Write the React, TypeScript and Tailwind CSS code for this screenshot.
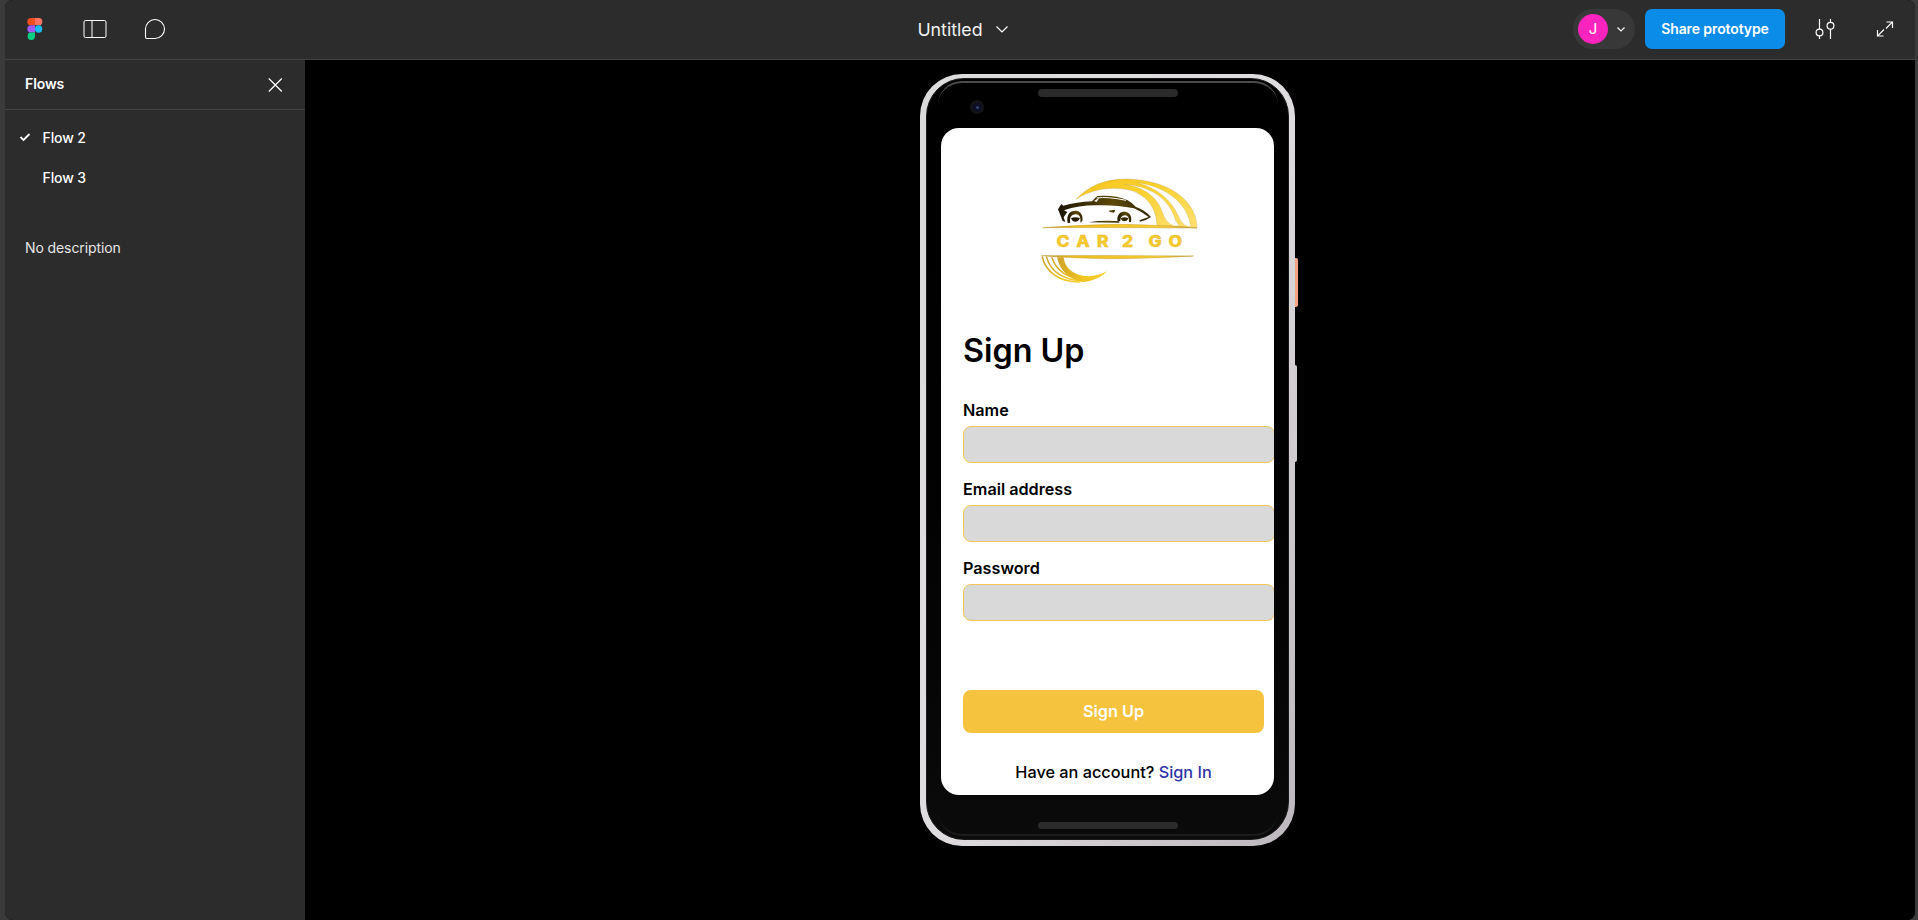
import React from "react";

function FigmaLogo() {
  return (
    <svg width="16" height="24" viewBox="0 0 16 24">
      <path d="M4 1h4v7.3H4A3.65 3.65 0 0 1 4 1z" fill="#f24e1e" />
      <path d="M8 1h3.7a3.65 3.65 0 0 1 0 7.3H8z" fill="#ff7262" />
      <path d="M4 8.3h4v7.3H4a3.65 3.65 0 0 1 0-7.3z" fill="#a259ff" />
      <circle cx="11.6" cy="12" r="3.65" fill="#1abcfe" />
      <path d="M4 15.6h4v3.7a3.7 3.7 0 1 1-4-3.7z" fill="#0acf83" />
    </svg>
  );
}

function CarLogo() {
  return (
    <svg width="200" height="140" viewBox="0 0 600 420" className="shrink-0">
      <defs>
        <linearGradient id="arc" x1="0" y1="0" x2="1" y2="1">
          <stop offset="0" stopColor="#f3c21c" />
          <stop offset="0.4" stopColor="#fbd22e" />
          <stop offset="1" stopColor="#ffe070" />
        </linearGradient>
        <linearGradient id="arc2" x1="0" y1="0" x2="1" y2="0">
          <stop offset="0" stopColor="#cfa22a" />
          <stop offset="0.5" stopColor="#f0c31e" />
          <stop offset="1" stopColor="#f9d235" />
        </linearGradient>
        <linearGradient id="line" x1="0" y1="0" x2="1" y2="0">
          <stop offset="0" stopColor="#a88a3a" />
          <stop offset="0.2" stopColor="#eebd1d" />
          <stop offset="0.8" stopColor="#f8cf35" />
          <stop offset="1" stopColor="#b89c4a" />
        </linearGradient>
        <linearGradient id="body" x1="0" y1="0" x2="1" y2="0">
          <stop offset="0" stopColor="#1d1503" />
          <stop offset="0.6" stopColor="#5d4a08" />
          <stop offset="1" stopColor="#2e2405" />
        </linearGradient>
      </defs>
      <path
        d="M168 118C205 78 255 56 322 57C440 60 530 118 531 203L411 196C410 145 378 98 318 88C265 80 215 88 168 118Z"
        fill="url(#arc)"
        stroke="#b59a45"
        strokeWidth="1"
      />
      <g fill="#fff" stroke="#c9ae5c" strokeWidth="1">
        <path d="M312 73C372 80 412 112 428 158Q436 188 462 198Q472 198 479 197Q466 186 461 165C440 112 388 78 312 73Z" />
        <path d="M352 68C412 84 456 122 474 166Q484 192 502 199L513 200Q510 190 507 176C488 118 428 78 352 68Z" />
      </g>
      <path d="M68 203Q190 194 300 193Q430 195 531 204Q300 202 68 203Z" fill="url(#line)" stroke="#c79c2a" strokeWidth="1.5" />
      <path d="M64 287Q290 286 521 288Q420 294 290 296Q160 295 64 287Z" fill="url(#line)" stroke="#c79c2a" strokeWidth="1.5" />
      <g fill="url(#body)">
        <path d="M114 148L124 132L130 137Q170 126 216 124Q226 113 232 108Q285 104 322 120Q336 128 347 140Q375 150 393 171Q378 182 360 185L358 181L386 171Q365 155 342 145Q280 133 228 136Q175 136 132 151L142 156L131 172L136 186L128 183Z" />
        <path d="M143 189C138 160 153 151 168 152C182 153 190 166 187 183L181 188Q184 162 166 163C153 164 148 174 151 188Z" />
        <path d="M292 182C291 160 303 154 316 155C330 157 337 170 333 186L327 187Q328 166 315 166Q300 167 301 184Z" />
        <path d="M153 174Q166 170 180 174Q176 185 166 185Q156 185 153 174ZM302 175Q314 169 325 175Q322 184 313 184Q305 184 302 175Z" />
        <path d="M205 187Q250 180 298 184L298 188Z M266 152L286 149L282 158L270 156Z" />
      </g>
      <path d="M230 114Q262 109 318 121" fill="none" stroke="#fff" strokeWidth="3" />
      <path d="M222 123L238 113L230 126Z" fill="#fff" />
      <g fill="none" stroke="url(#arc2)" strokeLinecap="round">
        <path d="M67 291C76 333 116 367 180 366" strokeWidth="4.500" />
        <path d="M80 292C91 332 127 361 190 363" strokeWidth="4.500" />
        <path d="M96 293C108 330 140 355 200 360" strokeWidth="4.500" />
      </g>
      <path d="M111 292L131 292C134 327 164 347 204 349Q235 348 262 333Q238 361 190 366C146 358 119 331 111 292Z" fill="url(#arc2)" />
      <g
        fill="#f7cb2e"
        stroke="#e0b326"
        strokeWidth="1"
        fontFamily="Inter, 'Liberation Sans', sans-serif"
        fontWeight="800"
        fontSize="47"
        transform="scale(1.12 1)"
      >
        <text y="262" x="98 151 206 273 344.500 398">CAR2GO</text>
      </g>
    </svg>
  );
}

function Header() {
  return (
    <header className="grid h-[60px] shrink-0 grid-cols-[1fr_auto_1fr] items-center border-b border-[#444444] bg-[#2c2c2c] pb-px text-white">
      <div className="flex items-center pl-[22px]">
        <FigmaLogo />
        <svg className="ml-[39px]" width="26" height="24" viewBox="0 0 26 24" fill="none" stroke="#fff">
          <rect x="2" y="3.500" width="22" height="17" rx="1.500" />
          <path d="M10 4v16" />
        </svg>
        <svg className="ml-[35px]" width="24" height="24" viewBox="0 0 24 24" fill="none" stroke="#fff" strokeWidth="1.1">
          <path d="M2.500 12a9.500 9.500 0 1 1 9.500 9.500H4A1.500 1.500 0 0 1 2.500 20z" />
        </svg>
      </div>
      <div className="flex items-center gap-3 pl-[6px]">
        <span className="pt-px text-[17.800px] leading-6 text-[#f2f2f2]">Untitled</span>
        <svg width="14" height="12" viewBox="0 0 14 12" fill="none" stroke="#fff" strokeWidth="1.2">
          <path d="M1.500 3.500L7 9l5.500-5.500" />
        </svg>
      </div>
      <div className="flex items-center justify-end pr-[20px]">
        <div className="flex h-10 w-[62px] items-center rounded-full bg-[#383838] pl-[5px]">
          <span className="flex size-[30px] items-center justify-center rounded-full bg-[#ff24bd] text-[15px]">J</span>
          <svg className="ml-[7px]" width="12" height="12" viewBox="0 0 12 12" fill="none" stroke="#fff" strokeWidth="1.2">
            <path d="M2.500 4.500L6 8l3.500-3.500" />
          </svg>
        </div>
        <button className="ml-[10px] h-10 w-[140px] rounded-[7px] bg-[#0c8ce9] pb-px text-[14px] font-semibold tracking-[-0.1px] whitespace-nowrap">
          Share prototype
        </button>
        <svg className="ml-[28px]" width="24" height="24" viewBox="0 0 24 24" fill="none" stroke="#fff" strokeWidth="1.2">
          <path d="M6.500 2v10M6.500 19v3M17.500 2v3M17.500 12v10" />
          <circle cx="6.500" cy="15.500" r="3.400" />
          <circle cx="17.500" cy="8.700" r="3.400" />
        </svg>
        <svg className="ml-[38px]" width="20" height="20" viewBox="0 0 20 20" fill="none" stroke="#fff" strokeWidth="1.2">
          <path d="M11.500 3H17.500V9M17.300 3.200L11 9.500M2.500 11v6H8.500M2.700 16.800L9 10.500" />
        </svg>
      </div>
    </header>
  );
}

function Sidebar() {
  return (
    <aside className="w-[300px] shrink-0 bg-[#2c2c2c] text-[14px] leading-5 text-white">
      <div className="flex h-[50px] items-center justify-between border-b border-[#444444] pr-[22px] pl-5">
        <h2 className="pb-px font-semibold tracking-[-0.1px]">Flows</h2>
        <svg width="16" height="16" viewBox="0 0 16 16" fill="none" stroke="#fff" strokeWidth="1.2">
          <path d="M1.800 1.500l13 13M14.800 1.500l-13 13" />
        </svg>
      </div>
      <ul className="pt-2">
        <li className="flex h-10 items-center pl-[14px] font-medium">
          <svg width="12" height="12" viewBox="0 0 12 12" fill="none" stroke="#fff" strokeWidth="1.800">
            <path d="M1.500 5l3 3L10.500 2" />
          </svg>
          <span className="ml-[11.500px] tracking-[-0.1px]">Flow 2</span>
        </li>
        <li className="flex h-10 items-center pl-[37.500px] font-medium tracking-[-0.1px]">Flow 3</li>
      </ul>
      <p className="mt-[40px] pl-5 tracking-[-0.1px] text-[#e6e6e6]">No description</p>
    </aside>
  );
}

function Field({ label, className }: { label: string; className: string }) {
  return (
    <label className={className}>
      <span className="block h-[26px] text-[16.200px] leading-5 font-semibold">{label}</span>
      <input className="block h-[37px] w-[312px] rounded-[8px] border border-[#f0c75a] bg-[#d9d9d9]" />
    </label>
  );
}

function Screen() {
  return (
    <div className="flex h-[667px] w-[333px] shrink-0 flex-col overflow-hidden rounded-[18px] bg-white text-black">
      <div className="mt-8 ml-[79px]">
        <CarLogo />
      </div>
      <h1 className="mt-[31px] ml-[22px] text-[32.300px] leading-10 font-semibold">Sign Up</h1>
      <Field label="Name" className="mt-[29px] ml-[22px] block" />
      <Field label="Email address" className="mt-4 ml-[22px] block" />
      <Field label="Password" className="mt-4 ml-[22px] block" />
      <button className="mt-[69px] ml-[22px] h-[43px] w-[301px] shrink-0 rounded-[8px] bg-[#f5c33e] pb-px text-[16.300px] font-semibold text-white">
        Sign Up
      </button>
      <p className="mt-[29px] ml-[22px] w-[301px] text-center text-[16.300px] leading-5 font-medium">
        Have an account? <a className="text-[#2f36a8]">Sign In</a>
      </p>
    </div>
  );
}

function Device() {
  return (
    <div className="relative mt-[14px] h-[772px] w-[375px] shrink-0">
      <div className="relative h-full rounded-[42px] bg-linear-to-br from-[#dcdcdc] via-[#e0dde0] to-[#bdb8bd] px-[6px] pt-[4px] pb-[6px]">
        <div className="flex h-full flex-col items-center rounded-[38px] border border-[#1a1a1a] bg-linear-to-b from-black to-[#0b0b0b]">
          <div className="mt-[2px] flex h-[47px] w-[340px] shrink-0 flex-col rounded-t-[24px] border-t-2 border-[#4a4a4a]">
            <div className="mt-[6px] ml-[100.500px] h-[8px] w-[140px] rounded-[4px] bg-[#2b2b2b]" />
            <div className="mt-[3px] ml-[32.500px] flex size-[14px] items-center justify-center rounded-full bg-[#141416]">
              <div className="flex size-[9px] items-center justify-center rounded-full bg-[#0e0e26]">
                <div className="size-[3px] rounded-full bg-[#34436b]" />
              </div>
            </div>
          </div>
          <Screen />
          <div className="flex h-[41px] w-[340px] shrink-0 flex-col items-center rounded-b-[24px] border-b-2 border-[#1c1c1c] pt-[27px]">
            <div className="ml-px h-[7px] w-[140px] shrink-0 rounded-[4px] bg-[#2b2b2b]" />
          </div>
        </div>
      </div>
      <div className="absolute top-[184px] right-[-3px] h-[49px] w-[3px] rounded-r-[2px] bg-[#f2a585]" />
      <div className="absolute top-[291px] right-[-2px] h-[97px] w-[3px] rounded-r-[2px] bg-[#d0cdd0]" />
    </div>
  );
}

export default function App() {
  return (
    <div className="h-[920px] w-full overflow-hidden bg-[#3b3b3b] pr-[3px] pl-[5px] font-[Inter,'Liberation_Sans',sans-serif]">
      <div className="flex h-full flex-col overflow-hidden rounded-[8px] bg-black">
        <Header />
        <div className="flex min-h-0 flex-1">
          <Sidebar />
          <main className="flex min-w-0 flex-1 items-start justify-center bg-black pr-[5px]">
            <Device />
          </main>
        </div>
      </div>
    </div>
  );
}
